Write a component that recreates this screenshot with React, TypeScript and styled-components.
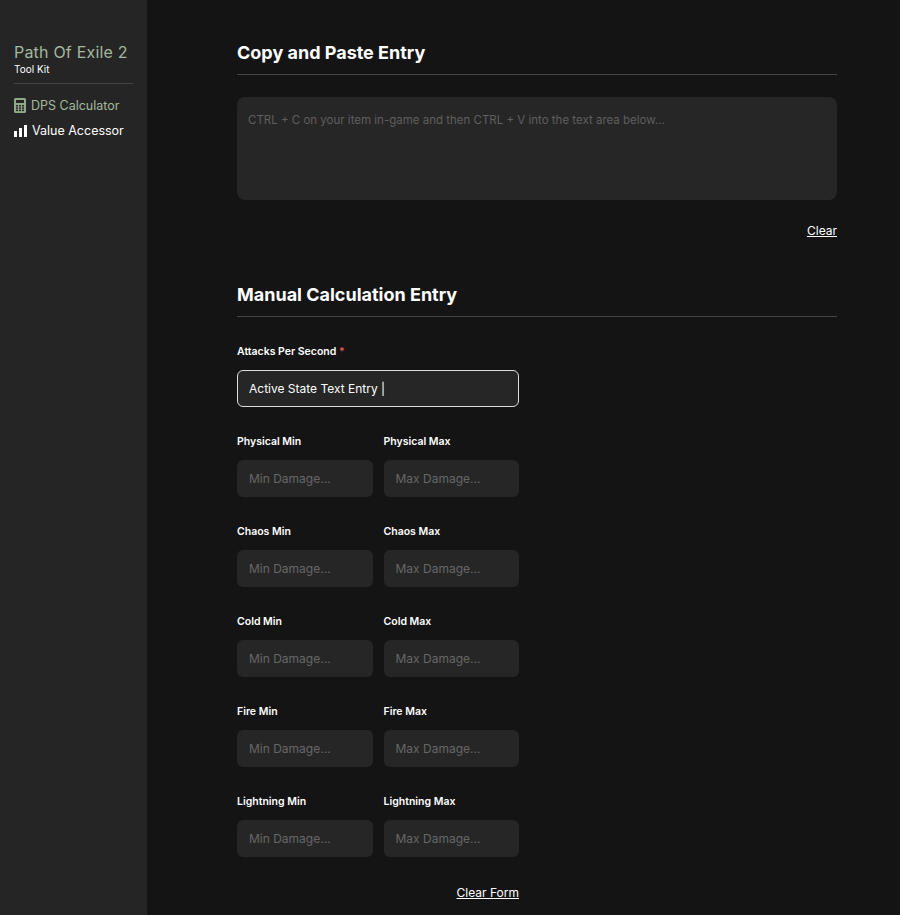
import React from "react";
import styled, { createGlobalStyle } from "styled-components";

const Global = createGlobalStyle`
  body { margin: 0; background: #141414; font-family: Inter, "Noto Sans", sans-serif; }
  * { box-sizing: border-box; }
`;

const fields = ["Physical", "Chaos", "Cold", "Fire", "Lightning"];

const App: React.FC = () => (
  <Container>
    <Global />
    <Sidebar>
      <Brand>Path Of Exile 2</Brand>
      <Sub>Tool Kit</Sub>
      <Divider />
      <NavItem active>
        <svg width="12" height="15" viewBox="0 0 12 15">
          <rect x="0" y="0" width="12" height="15" rx="1.5" fill="#8fa98a" />
          <rect x="2" y="2" width="8" height="3" fill="#252525" />
          {[0, 1, 2].map((r) =>
            [0, 1, 2].map((c) => (
              <rect key={`${r}${c}`} x={2 + c * 3} y={7 + r * 2.3} width="2" height="1.5" fill="#252525" />
            ))
          )}
        </svg>
        DPS Calculator
      </NavItem>
      <NavItem>
        <svg width="13" height="12" viewBox="0 0 13 12">
          <rect x="0" y="6" width="3" height="6" fill="#fff" />
          <rect x="5" y="3" width="3" height="9" fill="#fff" />
          <rect x="10" y="0" width="3" height="12" fill="#fff" />
        </svg>
        Value Accessor
      </NavItem>
    </Sidebar>
    <Main>
      <Section>
        <Heading>Copy and Paste Entry</Heading>
        <TextArea placeholder="CTRL + C on your item in-game and then CTRL + V into the text area below..." />
        <LinkRow top={23}>
          <TextLink>Clear</TextLink>
        </LinkRow>
      </Section>
      <Section>
        <Heading>Manual Calculation Entry</Heading>
        <Form>
          <Field>
            <Label>
              Attacks Per Second <Req>*</Req>
            </Label>
            <Input active readOnly value="Active State Text Entry |" />
          </Field>
          {fields.map((f) => (
            <Pair key={f}>
              <Field>
                <Label>{f} Min</Label>
                <Input placeholder="Min Damage..." />
              </Field>
              <Field>
                <Label>{f} Max</Label>
                <Input placeholder="Max Damage..." />
              </Field>
            </Pair>
          ))}
          <LinkRow top={0}>
            <TextLink>Clear Form</TextLink>
          </LinkRow>
        </Form>
      </Section>
    </Main>
  </Container>
);

const Container = styled.div`
  display: grid;
  grid-template-columns: 147px 1fr;
  min-height: 915px;
`;

const Sidebar = styled.aside`
  background: #252525;
  padding: 42px 14px 0;
`;

const Brand = styled.div`
  color: #a4b89e;
  font-size: 16px;
  letter-spacing: 0.2px;
`;

const Sub = styled.div`
  color: #fff;
  font-size: 10px;
  margin-top: 1px;
`;

const Divider = styled.div`
  height: 1px;
  background: #444;
  margin: 8px 0 9px;
`;

const NavItem = styled.div<{ active?: boolean }>`
  display: flex;
  align-items: center;
  gap: 5px;
  height: 25px;
  font-size: 12.5px;
  color: ${(p) => (p.active ? "#a4b89e" : "#fff")};
`;

const Main = styled.main`
  padding: 42px 0 0 90px;
  display: flex;
  flex-direction: column;
  gap: 46px;
  width: 690px;
`;

const Section = styled.section`
  display: flex;
  flex-direction: column;
`;

const Heading = styled.h2`
  margin: 0 0 22px;
  color: #fff;
  font-size: 18px;
  font-weight: 700;
  padding-bottom: 11px;
  border-bottom: 1px solid #444;
`;

const TextArea = styled.textarea`
  height: 103px;
  background: #262626;
  border: none;
  border-radius: 8px;
  padding: 16px 11px;
  resize: none;
  font-family: inherit;
  font-size: 11.5px;
  color: #fff;
  &::placeholder { color: #5f5f5f; }
`;

const LinkRow = styled.div<{ top: number }>`
  display: flex;
  justify-content: flex-end;
  margin-top: ${(p) => p.top}px;
`;

const TextLink = styled.a`
  color: #fff;
  font-size: 12px;
  text-decoration: underline;
  cursor: pointer;
`;

const Form = styled.div`
  width: 282px;
  display: flex;
  flex-direction: column;
  gap: 28px;
  padding-top: 6px;
`;

const Pair = styled.div`
  display: grid;
  grid-template-columns: 1fr 1fr;
  gap: 11px;
`;

const Field = styled.div`
  display: flex;
  flex-direction: column;
  gap: 4px;
`;

const Label = styled.label`
  color: #fff;
  font-size: 10.5px;
  font-weight: 600;
  height: 13px;
  margin-bottom: 8px;
`;

const Req = styled.span`
  color: #e05555;
`;

const Input = styled.input<{ active?: boolean }>`
  height: 37px;
  background: #262626;
  border: ${(p) => (p.active ? "1px solid #ddd" : "1px solid transparent")};
  border-radius: 6px;
  padding: 0 11px;
  font-family: inherit;
  font-size: 12px;
  color: #fff;
  width: 100%;
  outline: none;
  &::placeholder { color: #666; }
`;

export default App;
